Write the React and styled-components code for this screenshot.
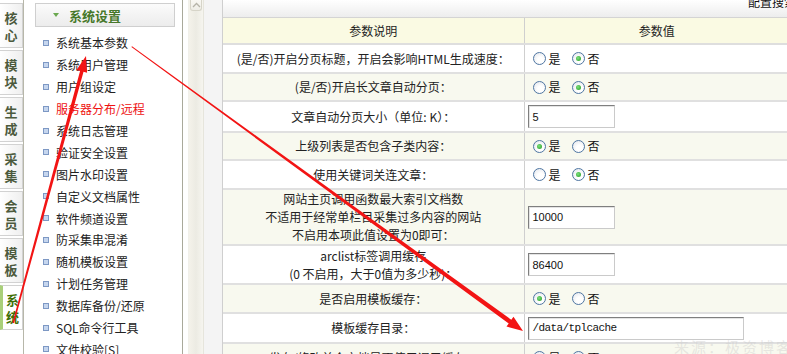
import React from "react";
import styled, { createGlobalStyle, css } from "styled-components";

const GlobalStyle = createGlobalStyle`
  html, body { margin: 0; padding: 0; width: 787px; height: 354px; overflow: hidden; background: #fff; }
  body { font-family: "Noto Sans CJK SC", "Liberation Sans", sans-serif; font-size: 12px; color: #222; }
  * { box-sizing: border-box; }
`;

const Page = styled.div`
  position: relative;
  display: flex;
  width: 787px;
  height: 354px;
  overflow: hidden;
`;

const TabBar = styled.div`
  width: 24px;
  flex: none;
  border-right: 1px solid #b7b7a9;
  padding-top: 3px;
  display: flex;
  flex-direction: column;
  gap: 2px;
`;

const Tab = styled.div`
  width: 23px;
  height: 45px;
  display: flex;
  align-items: center;
  justify-content: center;
  padding-top: 3px;
  font-size: 13px;
  font-weight: bold;
  color: #4c5a3d;
  background: linear-gradient(to right, #ffffff, #efefef);
  border: 1px solid #d2d2d2;
  border-left: none;
  ${(p) =>
    p.$active &&
    css`
      background: #fff;
      color: #3f6f06;
      border-left: 3px solid #a9cf7a;
    `}
`;

const TabText = styled.span`
  writing-mode: vertical-rl;
  text-orientation: upright;
  letter-spacing: 4px;
  line-height: 15px;
  margin-bottom: -4px;
`;

const Menu = styled.div`
  width: 159px;
  flex: none;
  border-right: 1px solid #a9a99b;
  padding: 3px 0 0 11px;
`;

const MenuHead = styled.div`
  width: 140px;
  height: 24px;
  border: 1px solid #cfcfcf;
  background: linear-gradient(#fbfbfb, #ececec);
  display: flex;
  align-items: center;
  padding-left: 17px;
  gap: 10px;
  font-size: 13px;
  font-weight: bold;
  color: #47782a;
`;

const Caret = styled.span`
  width: 0;
  height: 0;
  border-left: 3px solid transparent;
  border-right: 3px solid transparent;
  border-top: 4px solid #6aa84f;
`;

const MenuList = styled.ul`
  list-style: none;
  margin: 5px 0 0;
  padding: 0 0 0 8px;
`;

const MenuItem = styled.li`
  height: 21.9px;
  display: flex;
  align-items: center;
  gap: 7px;
  white-space: nowrap;
  color: ${(p) => (p.$red ? "#ee1111" : "#222")};
`;

const Bullet = styled.span`
  width: 6px;
  height: 6px;
  flex: none;
  border: 1px solid #7d98c4;
  background: #c6d6ee;
`;

const ScrollArea = styled.div`
  width: 21px;
  flex: none;
  padding-left: 5px;
`;

const Track = styled.div`
  width: 16px;
  height: 100%;
  background: linear-gradient(to right, #f4f2ea, #ecebe3 50%, #f6f5ef);
  border-left: 1px solid #f1f0ea;
  border-right: 1px solid #e6e5dc;
`;

const ScrollBtn = styled.div`
  height: 11px;
  margin: 0 1px;
  border: 1px solid #d6d4c8;
  border-top: none;
  border-radius: 0 0 3px 3px;
  background: linear-gradient(#f9f8f3, #eeede6);
  display: flex;
  justify-content: center;
  align-items: center;
`;

const Gutter = styled.div`
  width: 18px;
  flex: none;
  background: #f4f4f4;
`;

const Main = styled.div`
  flex: none;
  width: 567px;
  border-left: 1px solid #cfcfcf;
`;

const TopBar = styled.div`
  height: 18px;
  border-bottom: 1px solid #d4d4d4;
  background: linear-gradient(#ffffff, #ededed);
  padding-left: 525px;
  overflow: hidden;
  white-space: nowrap;
  line-height: 12px;
  font-size: 12px;
  color: #111;
`;

const TopText = styled.span`
  display: block;
  margin-top: -4px;
`;

const Table = styled.table`
  width: 566px;
  border-collapse: collapse;
  table-layout: fixed;
`;

const Cell = styled.td`
  height: ${(p) => p.$h}px;
  padding: 0;
  line-height: 18px;
  vertical-align: middle;
  border-bottom: 2px solid #e0e0e0;
  background: ${(p) => (p.$alt ? "#f8f9ef" : "#fff")};
  &:first-child {
    width: 301px;
    text-align: center;
    border-right: 1px solid #cfcfcf;
  }
`;

const HeadCell = styled.th`
  height: 26px;
  padding: 0;
  font-weight: normal;
  text-align: center;
  background: #fafae3;
  border-bottom: 2px solid #dedede;
  &:first-child {
    width: 301px;
    border-right: 1px solid #cfcfcf;
  }
`;

const ValueBox = styled.div`
  display: flex;
  align-items: center;
  padding-left: ${(p) => (p.$radio ? 8 : 3)}px;
`;

const Radio = styled.span`
  position: relative;
  width: 13px;
  height: 13px;
  flex: none;
  border-radius: 50%;
  border: 1px solid #4f76a2;
  background: radial-gradient(circle at 60% 65%, #ffffff 30%, #dfe3ea 100%);
  ${(p) =>
    p.$on &&
    css`
      &::after {
        content: "";
        position: absolute;
        left: 3px;
        top: 3px;
        width: 5px;
        height: 5px;
        border-radius: 50%;
        background: radial-gradient(circle at 40% 40%, #7ee07e, #1f9a1f);
      }
    `}
`;

const RadioLabel = styled.span`
  margin: 0 11px 0 3px;
  color: #111;
`;

const Field = styled.div`
  width: ${(p) => p.$w}px;
  height: 23px;
  border: 1px solid;
  border-color: #7f7f7f #cacaca #cacaca #7f7f7f;
  box-shadow: inset 1px 1px 0 #e4e4e4;
  background: #fff;
  display: flex;
  align-items: center;
  padding-left: 4px;
  font-family: ${(p) => (p.$mono ? '"Liberation Mono", monospace' : '"Liberation Sans", sans-serif')};
  font-size: 11px;
  letter-spacing: ${(p) => (p.$mono ? "-0.6px" : "0")};
  color: #111;
`;

const Overlay = styled.svg`
  position: absolute;
  left: 0;
  top: 0;
  pointer-events: none;
`;

const Watermark = styled.div`
  position: absolute;
  left: 674px;
  top: 336px;
  font-size: 15px;
  letter-spacing: 2px;
  color: rgba(200, 200, 200, 0.4);
  white-space: nowrap;
`;

const tabs = ["核心", "模块", "生成", "采集", "会员", "模板", "系统"];

const menu = [
  "系统基本参数",
  "系统用户管理",
  "用户组设定",
  "服务器分布/远程",
  "系统日志管理",
  "验证安全设置",
  "图片水印设置",
  "自定义文档属性",
  "软件频道设置",
  "防采集串混淆",
  "随机模板设置",
  "计划任务管理",
  "数据库备份/还原",
  "SQL命令行工具",
  "文件校验[S]",
];

const rows = [
  { label: ["(是/否)开启分页标题，开启会影响HTML生成速度："], radio: "否", h: 29 },
  { label: ["(是/否)开启长文章自动分页："], radio: "否", h: 28 },
  { label: ["文章自动分页大小（单位: K）："], input: "5", h: 31 },
  { label: ["上级列表是否包含子类内容："], radio: "是", h: 28 },
  { label: ["使用关键词关连文章："], radio: "否", h: 29 },
  {
    label: ["网站主页调用函数最大索引文档数", "不适用于经常单栏目采集过多内容的网站", "不启用本项此值设置为0即可："],
    input: "10000",
    h: 56,
  },
  { label: ["arclist标签调用缓存", "(0 不启用，大于0值为多少秒)："], input: "86400", h: 39 },
  { label: ["是否启用模板缓存："], radio: "是", h: 29 },
  { label: ["模板缓存目录："], input: "/data/tplcache", wide: true, h: 30 },
  { label: ["发布/修改单个文档是否使用调用缓存："], radio: "否", h: 29 },
];

function Value({ row }) {
  if (row.radio) {
    return (
      <ValueBox $radio>
        <Radio $on={row.radio === "是"} />
        <RadioLabel>是</RadioLabel>
        <Radio $on={row.radio === "否"} />
        <RadioLabel>否</RadioLabel>
      </ValueBox>
    );
  }
  return (
    <ValueBox>
      <Field $w={row.wide ? 216 : 87} $mono={row.wide}>
        {row.input}
      </Field>
    </ValueBox>
  );
}

export default function App() {
  return (
    <>
      <GlobalStyle />
      <Page>
        <TabBar>
          {tabs.map((t, i) => (
            <Tab key={t + i} $active={i === tabs.length - 1}>
              <TabText>{t}</TabText>
            </Tab>
          ))}
        </TabBar>
        <Menu>
          <MenuHead>
            <Caret />
            系统设置
          </MenuHead>
          <MenuList>
            {menu.map((m) => (
              <MenuItem key={m} $red={m === "服务器分布/远程"}>
                <Bullet />
                {m}
              </MenuItem>
            ))}
          </MenuList>
        </Menu>
        <ScrollArea>
          <Track>
            <ScrollBtn>
              <svg width="9" height="6" viewBox="0 0 9 6">
                <path d="M1 5 L4.5 1.5 L8 5" fill="none" stroke="#b5b3a8" strokeWidth="1.3" />
              </svg>
            </ScrollBtn>
          </Track>
        </ScrollArea>
        <Gutter />
        <Main>
          <TopBar>
            <TopText>配置搜索</TopText>
          </TopBar>
          <Table>
            <thead>
              <tr>
                <HeadCell>参数说明</HeadCell>
                <HeadCell>参数值</HeadCell>
              </tr>
            </thead>
            <tbody>
              {rows.map((r, i) => (
                <tr key={i}>
                  <Cell $h={r.h} $alt={i % 2 === 1}>
                    {r.label.map((l, j) => (
                      <div key={j}>{l}</div>
                    ))}
                  </Cell>
                  <Cell $h={r.h} $alt={i % 2 === 1}>
                    <Value row={r} />
                  </Cell>
                </tr>
              ))}
            </tbody>
          </Table>
        </Main>
        <Watermark>来源：极资博客</Watermark>
        <Overlay width="787" height="354" viewBox="0 0 787 354">
          <polygon
            fill="#f21414"
            points="131.4,47.1 508.7,323.4 506.5,326.5 523,331 513.5,316.7 511.3,319.8 132,46.3"
          />
          <polygon
            fill="#f21414"
            points="14.07,323.2 83.54,71.87 87.1,72.84 86,56 76.5,69.96 80.06,70.93 12.53,322.8"
          />
        </Overlay>
      </Page>
    </>
  );
}
